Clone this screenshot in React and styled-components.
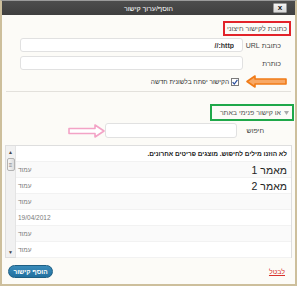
import React from 'react'
import styled, { createGlobalStyle } from 'styled-components'

const GlobalStyle = createGlobalStyle`
  html, body {
    margin: 0;
    padding: 0;
    background: #ffffff;
  }
  * {
    box-sizing: border-box;
  }
`

const Frame = styled.div`
  width: 297px;
  height: 286px;
  border: 2px solid #cdbf9c;
  border-top: 1px solid #9b9b9b;
  background: #fcfbf7;
  display: flex;
  flex-direction: column;
  font-family: 'Liberation Sans', 'DejaVu Sans', sans-serif;
  color: #333;
  overflow: hidden;
`

const TitleBar = styled.div`
  height: 14px;
  flex: 0 0 auto;
  background: linear-gradient(#4d4d4d, #3f3f3f);
  display: grid;
  grid-template-columns: 22px 1fr 22px;
  align-items: center;
`

const Title = styled.div`
  grid-column: 2;
  text-align: center;
  color: #fff;
  font-size: 7px;
`

const Close = styled.div`
  grid-column: 3;
  justify-self: start;
  width: 14px;
  height: 10px;
  background: linear-gradient(#f4f4f4, #d8d8d8);
  border: 1px solid #999;
  border-radius: 1px;
  font-size: 8px;
  font-weight: bold;
  line-height: 8px;
  text-align: center;
  color: #111;
`

const Body = styled.div`
  flex: 1 1 auto;
  display: flex;
  flex-direction: column;
  align-items: stretch;
  padding: 0 4px;
`

const RedBox = styled.div`
  align-self: flex-start;
  margin-top: 6px;
  height: 15px;
  border: 2px solid #e2232a;
  padding: 0 2px;
  font-size: 7px;
  line-height: 11px;
  color: #555;
`

const FieldRow = styled.div`
  display: grid;
  grid-template-columns: ${({ $label }) => $label}px ${({ $input }) => $input}px;
  align-items: center;
  margin-top: ${({ $top }) => $top}px;
  padding-right: ${({ $right }) => $right}px;
`

const Label = styled.label`
  font-size: 7px;
  color: #444;
  white-space: nowrap;
`

const Input = styled.input`
  height: ${({ $h }) => $h}px;
  width: 100%;
  border: 1px solid #e1e1e1;
  border-radius: 3px;
  background: #fff;
  padding: 0 8px;
  font-family: inherit;
  font-size: 7px;
  font-weight: bold;
  color: #333;
  outline: none;
`

const CheckRow = styled.div`
  display: grid;
  grid-template-columns: 55px auto;
  align-items: center;
  margin-top: 5px;
  height: 12px;
  margin-right: -3px;
`

const ArrowSlot = styled.div`
  display: flex;
  padding-right: 6px;
`

const CheckLabel = styled.label`
  display: flex;
  align-items: center;
  gap: 2px;
  font-size: 6.5px;
  color: #333;
`

const Box = styled.span`
  width: 8px;
  height: 8px;
  border: 1px solid #7b7b7b;
  background: #fff;
  display: flex;
  align-items: center;
  justify-content: center;
`

const Separator = styled.div`
  margin-top: 4px;
  border-bottom: 1px solid #e3e1dc;
`

const GreenBox = styled.div`
  align-self: flex-start;
  margin-top: 12px;
  margin-right: -3px;
  height: 17px;
  border: 2px solid #1fa84a;
  padding: 0 3px 0 8px;
  display: flex;
  align-items: center;
  gap: 3px;
  font-size: 7px;
  color: #555;
`

const SearchRow = styled.div`
  display: grid;
  grid-template-columns: 27px 132px 40px;
  align-items: center;
  margin-top: 2px;
  padding-right: 27px;
`

const List = styled.div`
  margin: 7px -1px 0;
  height: 113px;
  border: 1px solid #dedede;
  background: #fff;
  display: flex;
`

const Rows = styled.div`
  flex: 1 1 auto;
  display: flex;
  flex-direction: column;
`

const Row = styled.div`
  height: 16px;
  flex: 0 0 auto;
  display: flex;
  align-items: center;
  justify-content: space-between;
  padding: 0 4px 0 2px;
  background: ${({ $alt }) => ($alt ? '#fafafa' : '#fff')};
  border-bottom: 1px solid #f2f2f2;
`

const Notice = styled.div`
  font-size: 6.5px;
  font-weight: bold;
  color: #222;
`

const ItemTitle = styled.div`
  font-size: 10.5px;
  color: #222;
`

const ItemInfo = styled.div`
  font-size: 6.5px;
  color: #7a7a7a;
`

const Scrollbar = styled.div`
  flex: 0 0 10px;
  background: #f1f1f1;
  border-right: 1px solid #e4e4e4;
  display: flex;
  flex-direction: column;
  align-items: center;
  justify-content: space-between;
  padding: 4px 0 2px;
`

const ScrollArrow = styled.div`
  font-size: 5px;
  line-height: 5px;
  color: #444;
`

const Thumb = styled.div`
  width: 8px;
  height: 13px;
  margin-top: 3px;
  border: 1px solid #b3b3b3;
  border-radius: 2px;
  background: linear-gradient(90deg, #f7f7f7, #dcdcdc);
  display: flex;
  align-items: center;
  justify-content: center;
  font-size: 6px;
  color: #777;
`

const ScrollSpace = styled.div`
  flex: 1 1 auto;
`

const Footer = styled.div`
  flex: 1 1 auto;
  display: flex;
  align-items: center;
  justify-content: space-between;
  padding: 0 6px 0 2px;
`

const Cancel = styled.a`
  font-size: 7px;
  color: #d8322d;
  text-decoration: underline;
`

const Button = styled.button`
  width: 45px;
  height: 13px;
  border: 1px solid #1f5f83;
  border-radius: 7px;
  background: linear-gradient(#3a8cba, #22709f);
  color: #fff;
  font-family: inherit;
  font-size: 6.5px;
  font-weight: bold;
  padding: 0;
`

const OrangeArrow = () => (
  <svg width="42" height="13" viewBox="0 0 42 13">
    <polygon
      points="1,6.5 9,1 9,4 40,4 40,9 9,9 9,12"
      fill="#f8a865"
      stroke="#f07b17"
      strokeWidth="1.6"
      strokeLinejoin="round"
    />
  </svg>
)

const PinkArrow = () => (
  <svg width="37" height="14" viewBox="0 0 37 14">
    <polygon
      points="36,7 27,1 27,4.5 1,4.5 1,9.5 27,9.5 27,13"
      fill="#fff"
      stroke="#f3a3c6"
      strokeWidth="1.6"
      strokeLinejoin="round"
    />
  </svg>
)

const DownTriangle = () => (
  <svg width="5" height="4" viewBox="0 0 5 4">
    <polygon points="0,0 5,0 2.5,4" fill="#aaa" />
  </svg>
)

const items = [
  { title: 'מאמר 1', info: 'עמוד' },
  { title: 'מאמר 2', info: 'עמוד' },
  { title: '', info: 'עמוד' },
  { title: '', info: '19/04/2012' },
  { title: '', info: 'עמוד' },
  { title: '', info: 'עמוד' },
]

const App = () => (
  <>
    <GlobalStyle />
    <Frame dir="rtl">
      <TitleBar dir="ltr">
        <Title dir="rtl">הוסף/ערוך קישור</Title>
        <Close>x</Close>
      </TitleBar>
      <Body>
        <RedBox>כתובת לקישור חיצוני</RedBox>
        <FieldRow $label={38} $input={223} $top={2} $right={10}>
          <Label>כתובת URL</Label>
          <Input $h={14} defaultValue="http://" />
        </FieldRow>
        <FieldRow $label={38} $input={223} $top={4} $right={10}>
          <Label>כותרת</Label>
          <Input $h={14} />
        </FieldRow>
        <CheckRow>
          <ArrowSlot>
            <OrangeArrow />
          </ArrowSlot>
          <CheckLabel>
            <Box>
              <svg width="6" height="6" viewBox="0 0 6 6">
                <path d="M0.6 3.2 L2.3 5 L5.4 0.8" fill="none" stroke="#2b4f9e" strokeWidth="1.2" />
              </svg>
            </Box>
            הקישור יפתח בלשונית חדשה
          </CheckLabel>
        </CheckRow>
        <Separator />
        <GreenBox>
          <DownTriangle />
          <span>או קישור פנימי באתר</span>
        </GreenBox>
        <SearchRow>
          <Label>חיפוש</Label>
          <Input $h={15} />
          <PinkArrow />
        </SearchRow>
        <List>
          <Rows>
            <Row>
              <Notice>לא הוזנו מילים לחיפוש. מוצגים פריטים אחרונים.</Notice>
            </Row>
            {items.map((item, i) => (
              <Row key={i} $alt={i % 2 === 0}>
                <ItemTitle>{item.title}</ItemTitle>
                <ItemInfo>{item.info}</ItemInfo>
              </Row>
            ))}
          </Rows>
          <Scrollbar>
            <ScrollArrow>▲</ScrollArrow>
            <Thumb>≡</Thumb>
            <ScrollSpace />
            <ScrollArrow>▼</ScrollArrow>
          </Scrollbar>
        </List>
        <Footer>
          <Cancel>לבטל</Cancel>
          <Button>הוסף קישור</Button>
        </Footer>
      </Body>
    </Frame>
  </>
)

export default App
